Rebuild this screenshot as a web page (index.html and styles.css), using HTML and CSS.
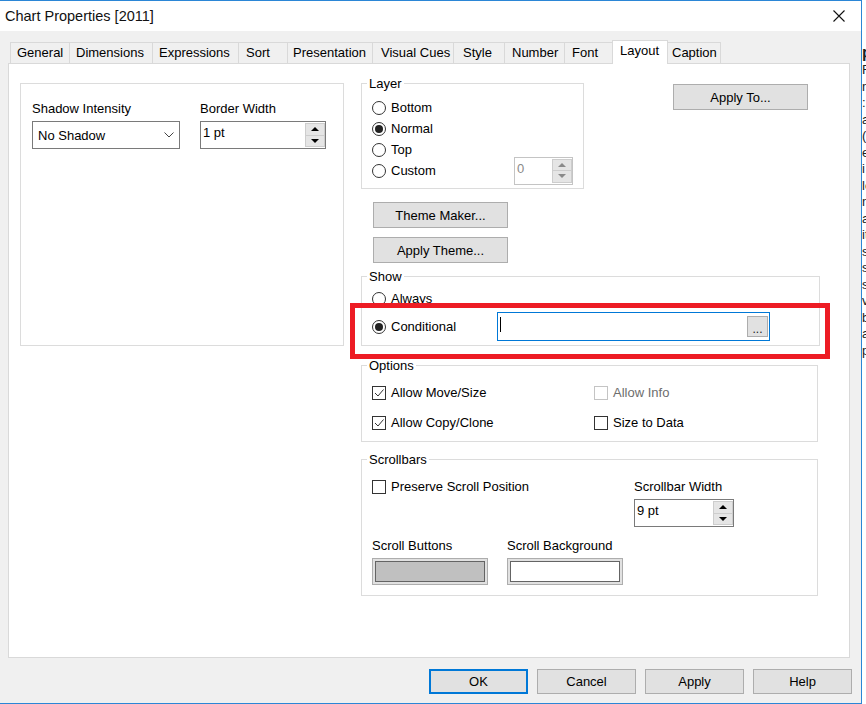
FILE: index.html
```html
<!DOCTYPE html>
<html>
<head>
<meta charset="utf-8">
<link rel="stylesheet" href="styles.css">
</head>
<body>
<div class="desk">
  <div class="window">
    <div class="titlebar">
      <span class="title">Chart Properties [2011]</span>
      <span class="close"><svg width="12" height="12" viewBox="0 0 12 12"><path d="M0.5 0.5 L11.5 11.5 M11.5 0.5 L0.5 11.5" stroke="#111" stroke-width="1.1" fill="none"/></svg></span>
    </div>
    <div class="client">
      <div class="tabs">
        <div class="tab">General</div>
        <div class="tab">Dimensions</div>
        <div class="tab">Expressions</div>
        <div class="tab">Sort</div>
        <div class="tab">Presentation</div>
        <div class="tab">Visual Cues</div>
        <div class="tab">Style</div>
        <div class="tab">Number</div>
        <div class="tab">Font</div>
        <div class="tab sel">Layout</div>
        <div class="tab">Caption</div>
      </div>
      <div class="panel">
        <div class="grp plain">
          <div class="field w148">
            <div class="lbl">Shadow Intensity</div>
            <div class="select"><span>No Shadow</span><svg width="10" height="6" viewBox="0 0 10 6"><polyline points="0.5,0.5 5,5 9.5,0.5" stroke="#444" stroke-width="1" fill="none"/></svg></div>
          </div>
          <div class="field w126">
            <div class="lbl">Border Width</div>
            <div class="spin"><span class="val">1 pt</span><span class="sbs"><span class="sb"><i class="up"></i></span><span class="sb"><i class="dn"></i></span></span></div>
          </div>
        </div>

        <div class="right">
          <div class="toprow">
            <div class="grp layer">
              <div class="lg">Layer</div>
              <div class="rows">
                <div class="row"><span class="radio"></span>Bottom</div>
                <div class="row"><span class="radio on"></span>Normal</div>
                <div class="row"><span class="radio"></span>Top</div>
                <div class="row"><span class="radio"></span>Custom
                  <div class="spin small dis"><span class="val">0</span><span class="sbs"><span class="sb"><i class="up"></i></span><span class="sb"><i class="dn"></i></span></span></div>
                </div>
              </div>
            </div>
            <div class="btn applyto">Apply To...</div>
          </div>
          <div class="btn theme first">Theme Maker...</div>
          <div class="btn theme second">Apply Theme...</div>

          <div class="grp show">
            <div class="lg">Show</div>
            <div class="row r-always"><span class="radio"></span>Always</div>
            <div class="row r-cond"><span class="radio on"></span><span class="cond-label">Conditional</span>
              <div class="expr"><span class="caret"></span><span class="dots">...</span></div>
            </div>
          </div>

          <div class="grp options">
            <div class="lg">Options</div>
            <div class="optgrid">
              <div class="row"><span class="chk"><svg width="12" height="12" viewBox="0 0 12 12"><polyline points="2,6 5,9 10.5,2.5" stroke="#333" stroke-width="1" fill="none"/></svg></span>Allow Move/Size</div>
              <div class="row disabled"><span class="chk"></span>Allow Info</div>
              <div class="row"><span class="chk"><svg width="12" height="12" viewBox="0 0 12 12"><polyline points="2,6 5,9 10.5,2.5" stroke="#333" stroke-width="1" fill="none"/></svg></span>Allow Copy/Clone</div>
              <div class="row"><span class="chk"></span>Size to Data</div>
            </div>
          </div>

          <div class="grp scroll">
            <div class="lg">Scrollbars</div>
            <div class="scgrid">
              <div class="cell span2"><div class="row line"><span class="chk"></span>Preserve Scroll Position</div></div>
              <div class="cell">
                <div class="lbl">Scrollbar Width</div>
                <div class="spin w100"><span class="val">9 pt</span><span class="sbs"><span class="sb"><i class="up"></i></span><span class="sb"><i class="dn"></i></span></span></div>
              </div>
              <div class="cell">
                <div class="lbl">Scroll Buttons</div>
                <div class="swatch"><span class="inner grey"></span></div>
              </div>
              <div class="cell">
                <div class="lbl">Scroll Background</div>
                <div class="swatch"><span class="inner white"></span></div>
              </div>
            </div>
          </div>
        </div>

        <div class="highlight"></div>
      </div>
      <div class="buttons">
        <div class="btn dlg ok">OK</div>
        <div class="btn dlg">Cancel</div>
        <div class="btn dlg">Apply</div>
        <div class="btn dlg">Help</div>
      </div>
    </div>
  </div>
  <div class="behind">
    <div class="bl big">p</div>
    <div class="bl">Fa</div>
    <div class="bl">n</div>
    <div class="bl">:</div>
    <div class="bl">a</div>
    <div class="bl">(C</div>
    <div class="bl">e</div>
    <div class="bl">i</div>
    <div class="bl">lo</div>
    <div class="bl">n</div>
    <div class="bl">a</div>
    <div class="bl">it</div>
    <div class="bl">sl</div>
    <div class="bl">sl</div>
    <div class="bl">st</div>
    <div class="bl">v</div>
    <div class="bl">b</div>
    <div class="bl">al</div>
    <div class="bl">p</div>
  </div>
</div>
</body>
</html>
```

FILE: styles.css
```css
html, body {
  margin: 0;
  padding: 0;
}
body {
  width: 866px;
  height: 704px;
  overflow: hidden;
  background: #fff;
  font-family: "Liberation Sans", Arial, sans-serif;
  font-size: 13px;
  line-height: 15px;
  color: #000;
}
.desk {
  display: flex;
}
.window {
  flex: none;
  width: 862px;
  height: 704px;
  box-sizing: border-box;
  border-top: 1px solid #2b86d6;
  border-right: 1px solid #2b86d6;
  border-bottom: 1px solid #2b86d6;
  display: flex;
  flex-direction: column;
}
.titlebar {
  flex: none;
  height: 30px;
  background: #fff;
  display: flex;
  align-items: center;
  justify-content: space-between;
}
.title {
  padding-left: 5px;
  font-size: 14.5px;
  line-height: 30px;
  color: #111;
}
.close {
  width: 46px;
  height: 30px;
  margin-right: -1px;
  display: flex;
  align-items: center;
  justify-content: center;
}
.client {
  flex: 1;
  background: #f0f0f0;
  padding: 9px 9px 0 8px;
}

/* tabs */
.tabs {
  display: flex;
  align-items: flex-end;
  height: 23px;
  padding-left: 2px;
}
.tab {
  box-sizing: border-box;
  height: 21px;
  border: 1px solid #d9d9d9;
  border-bottom: none;
  background: #f0f0f0;
  line-height: 20px;
  text-align: left;
  padding-left: 6px;
  margin-left: -1px;
  white-space: nowrap;
}
.tab:first-child { margin-left: 0; }
.tab:nth-child(1) { width: 60px; }
.tab:nth-child(2) { width: 84px; }
.tab:nth-child(3) { width: 87px; }
.tab:nth-child(4) { width: 50px; padding-left: 7px; }
.tab:nth-child(5) { width: 86px; padding-left: 5px; }
.tab:nth-child(6) { width: 82px; padding-left: 8px; }
.tab:nth-child(7) { width: 52px; padding-left: 9px; }
.tab:nth-child(8) { width: 61px; padding-left: 7px; }
.tab:nth-child(9) { width: 49px; padding-left: 7px; }
.tab:nth-child(10) { width: 56px; padding-left: 7px; }
.tab:nth-child(11) { width: 54px; padding-left: 4px; }
.tab.sel {
  height: 24px;
  background: #fff;
  margin-bottom: -1px;
  position: relative;
  z-index: 1;
  line-height: 19px;
}

/* panel */
.panel {
  position: relative;
  box-sizing: border-box;
  width: 842px;
  height: 595px;
  border: 1px solid #d9d9d9;
  background: #fff;
  padding: 19px 0 0 11px;
  display: grid;
  grid-template-columns: 324px 459px;
  column-gap: 17px;
  align-items: start;
}

.grp {
  box-sizing: border-box;
  border: 1px solid #dcdcdc;
}
.lg {
  width: fit-content;
  margin: -8px 0 0 5px;
  padding: 0 2px;
  background: #fff;
  line-height: 15px;
}

.plain {
  height: 263px;
  padding: 17px 0 0 11px;
  display: flex;
  gap: 20px;
}
.field.w148 { width: 148px; }
.field.w126 { width: 126px; }
.lbl {
  line-height: 15px;
  white-space: nowrap;
}
.field .lbl { margin-bottom: 5px; }

.select {
  box-sizing: border-box;
  height: 28px;
  border: 1px solid #7a7a7a;
  background: #fff;
  display: flex;
  align-items: center;
  justify-content: space-between;
  padding: 0 5px 0 5px;
}

.spin {
  box-sizing: border-box;
  height: 28px;
  border: 1px solid #7a7a7a;
  background: #fff;
  display: flex;
}
.spin .val {
  flex: 1;
  padding: 3px 0 0 2px;
}
.spin.w100 { width: 100px; }
.spin.small {
  width: 59px;
  margin-left: auto;
  margin-right: 10px;
  border-color: #c4c4c4;
}
.spin.dis .val { color: #8a8a8a; }
.sbs {
  width: 20px;
  display: flex;
  flex-direction: column;
  padding: 1px 0;
}
.sb {
  flex: 1;
  box-sizing: border-box;
  background: #e5e5e5;
  border: 1px solid #cdcdcd;
  display: flex;
  align-items: center;
  justify-content: center;
}
.sb + .sb { border-top: none; }
.up, .dn {
  width: 0;
  height: 0;
  border-left: 4px solid transparent;
  border-right: 4px solid transparent;
}
.up { border-bottom: 4px solid #000; }
.dn { border-top: 4px solid #000; }
.spin.dis .up { border-bottom-color: #8a8a8a; }
.spin.dis .dn { border-top-color: #8a8a8a; }

/* right column */
.right {
  display: flex;
  flex-direction: column;
  align-items: flex-start;
}
.toprow {
  display: flex;
  align-items: flex-start;
}
.layer {
  width: 223px;
  height: 106px;
}
.rows {
  margin-top: 6px;
}
.row {
  display: flex;
  align-items: center;
  height: 21px;
  padding-left: 10px;
  white-space: nowrap;
}
.radio {
  flex: none;
  box-sizing: border-box;
  width: 14px;
  height: 14px;
  border: 1px solid #333;
  border-radius: 50%;
  background: #fff;
  margin-right: 5px;
  display: flex;
  align-items: center;
  justify-content: center;
}
.radio.on::after {
  content: "";
  width: 8px;
  height: 8px;
  border-radius: 50%;
  background: #222;
}

.btn {
  box-sizing: border-box;
  background: #e1e1e1;
  border: 1px solid #adadad;
  display: flex;
  align-items: center;
  justify-content: center;
  white-space: nowrap;
}
.applyto {
  width: 135px;
  height: 26px;
  margin: 1px 0 0 89px;
}
.theme {
  width: 135px;
  height: 26px;
  margin-left: 12px;
}
.theme.first { margin-top: 13px; }
.theme.second { margin-top: 9px; }

.show {
  width: 459px;
  height: 70px;
  margin-top: 13px;
}
.r-always { margin-top: 4px; }
.r-cond {
  margin-top: 3px;
  height: 29px;
}
.cond-label {
  width: 106px;
  flex: none;
}
.expr {
  box-sizing: border-box;
  width: 273px;
  height: 29px;
  border: 1px solid #0078d7;
  background: #fff;
  display: flex;
  align-items: center;
  justify-content: space-between;
  padding: 0 1px 0 2px;
}
.caret {
  width: 1px;
  height: 15px;
  background: #000;
  margin-top: -4px;
}
.dots {
  box-sizing: border-box;
  width: 21px;
  height: 21px;
  background: #e1e1e1;
  border: 1px solid #adadad;
  font-size: 12px;
  line-height: 24px;
  text-align: center;
  color: #222;
  overflow: hidden;
}

.options {
  width: 457px;
  height: 77px;
  margin-top: 19px;
}
.optgrid {
  margin-top: 9px;
  padding-left: 10px;
  display: grid;
  grid-template-columns: 222px auto;
  row-gap: 9px;
}
.optgrid .row { padding-left: 0; }
.chk {
  flex: none;
  box-sizing: border-box;
  width: 14px;
  height: 14px;
  border: 1px solid #333;
  background: #fff;
  margin-right: 5px;
  display: flex;
  align-items: center;
  justify-content: center;
}
.row.disabled { color: #6d6d6d; }
.row.disabled .chk { border-color: #c4c4c4; }

.scroll {
  width: 457px;
  height: 137px;
  margin-top: 17px;
}
.scgrid {
  margin-top: 12px;
  padding-left: 10px;
  display: grid;
  grid-template-columns: 135px 127px auto;
  row-gap: 11px;
  align-items: start;
}
.span2 { grid-column: span 2; }
.row.line {
  height: 15px;
  padding-left: 0;
}
.scgrid .lbl { margin-bottom: 5px; }
.swatch {
  box-sizing: border-box;
  width: 116px;
  height: 27px;
  background: #e1e1e1;
  border: 1px solid #adadad;
  padding: 2px;
  display: flex;
}
.inner {
  flex: 1;
  border: 1px solid #646464;
}
.inner.grey { background: #c0c0c0; }
.inner.white { background: #fff; }

.highlight {
  position: absolute;
  left: 341px;
  top: 239px;
  width: 480px;
  height: 56px;
  box-sizing: border-box;
  border: 5px solid #ed1c24;
  pointer-events: none;
}

.buttons {
  display: flex;
  justify-content: flex-end;
  gap: 9px;
  margin-top: 11px;
}
.dlg {
  width: 99px;
  height: 25px;
}
.dlg.ok {
  border: 2px solid #0078d7;
}

.behind {
  flex: none;
  width: 4px;
  height: 704px;
  overflow: hidden;
  background: #fff;
  padding-top: 44px;
  box-sizing: border-box;
}
.bl {
  line-height: 16.5px;
  font-size: 13px;
  color: #222;
  white-space: nowrap;
}
.bl.big {
  font-weight: bold;
  font-size: 16px;
  line-height: 18px;
}
```
